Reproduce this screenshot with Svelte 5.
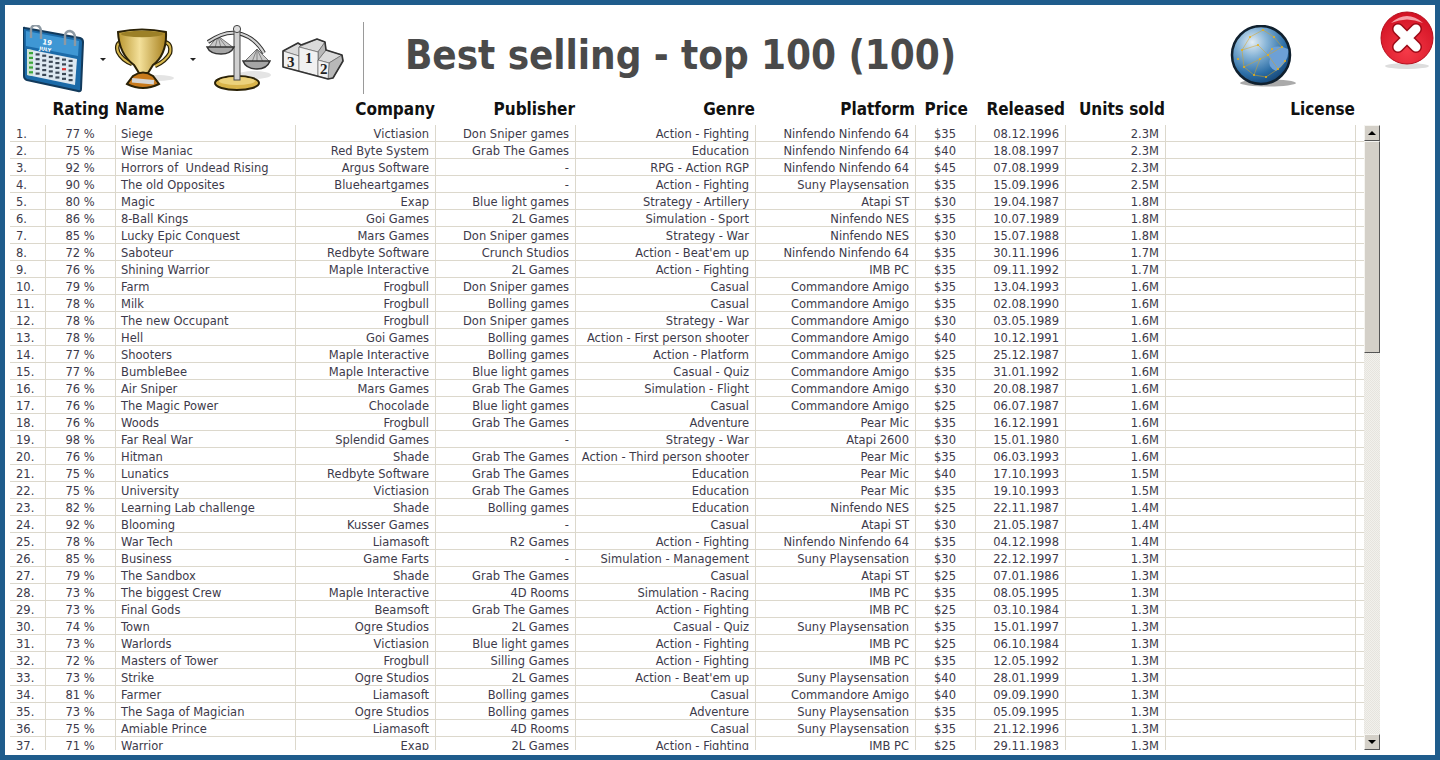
<script lang="ts">
	const raw = `77|Siege|Victiasion|Don Sniper games|Action - Fighting|Ninfendo Ninfendo 64|35|08.12.1996|2.3M
75|Wise Maniac|Red Byte System|Grab The Games|Education|Ninfendo Ninfendo 64|40|18.08.1997|2.3M
92|Horrors of  Undead Rising|Argus Software|-|RPG - Action RGP|Ninfendo Ninfendo 64|45|07.08.1999|2.3M
90|The old Opposites|Blueheartgames|-|Action - Fighting|Suny Playsensation|35|15.09.1996|2.5M
80|Magic|Exap|Blue light games|Strategy - Artillery|Atapi ST|30|19.04.1987|1.8M
86|8-Ball Kings|Goi Games|2L Games|Simulation - Sport|Ninfendo NES|35|10.07.1989|1.8M
85|Lucky Epic Conquest|Mars Games|Don Sniper games|Strategy - War|Ninfendo NES|30|15.07.1988|1.8M
72|Saboteur|Redbyte Software|Crunch Studios|Action - Beat'em up|Ninfendo Ninfendo 64|35|30.11.1996|1.7M
76|Shining Warrior|Maple Interactive|2L Games|Action - Fighting|IMB PC|35|09.11.1992|1.7M
79|Farm|Frogbull|Don Sniper games|Casual|Commandore Amigo|35|13.04.1993|1.6M
78|Milk|Frogbull|Bolling games|Casual|Commandore Amigo|35|02.08.1990|1.6M
78|The new Occupant|Frogbull|Don Sniper games|Strategy - War|Commandore Amigo|30|03.05.1989|1.6M
78|Hell|Goi Games|Bolling games|Action - First person shooter|Commandore Amigo|40|10.12.1991|1.6M
77|Shooters|Maple Interactive|Bolling games|Action - Platform|Commandore Amigo|25|25.12.1987|1.6M
77|BumbleBee|Maple Interactive|Blue light games|Casual - Quiz|Commandore Amigo|35|31.01.1992|1.6M
76|Air Sniper|Mars Games|Grab The Games|Simulation - Flight|Commandore Amigo|30|20.08.1987|1.6M
76|The Magic Power|Chocolade|Blue light games|Casual|Commandore Amigo|25|06.07.1987|1.6M
76|Woods|Frogbull|Grab The Games|Adventure|Pear Mic|35|16.12.1991|1.6M
98|Far Real War|Splendid Games|-|Strategy - War|Atapi 2600|30|15.01.1980|1.6M
76|Hitman|Shade|Grab The Games|Action - Third person shooter|Pear Mic|35|06.03.1993|1.6M
75|Lunatics|Redbyte Software|Grab The Games|Education|Pear Mic|40|17.10.1993|1.5M
75|University|Victiasion|Grab The Games|Education|Pear Mic|35|19.10.1993|1.5M
82|Learning Lab challenge|Shade|Bolling games|Education|Ninfendo NES|25|22.11.1987|1.4M
92|Blooming|Kusser Games|-|Casual|Atapi ST|30|21.05.1987|1.4M
78|War Tech|Liamasoft|R2 Games|Action - Fighting|Ninfendo Ninfendo 64|35|04.12.1998|1.4M
85|Business|Game Farts|-|Simulation - Management|Suny Playsensation|30|22.12.1997|1.3M
79|The Sandbox|Shade|Grab The Games|Casual|Atapi ST|25|07.01.1986|1.3M
73|The biggest Crew|Maple Interactive|4D Rooms|Simulation - Racing|IMB PC|35|08.05.1995|1.3M
73|Final Gods|Beamsoft|Grab The Games|Action - Fighting|IMB PC|25|03.10.1984|1.3M
74|Town|Ogre Studios|2L Games|Casual - Quiz|Suny Playsensation|35|15.01.1997|1.3M
73|Warlords|Victiasion|Blue light games|Action - Fighting|IMB PC|25|06.10.1984|1.3M
72|Masters of Tower|Frogbull|Silling Games|Action - Fighting|IMB PC|35|12.05.1992|1.3M
73|Strike|Ogre Studios|2L Games|Action - Beat'em up|Suny Playsensation|40|28.01.1999|1.3M
81|Farmer|Liamasoft|Bolling games|Casual|Commandore Amigo|40|09.09.1990|1.3M
73|The Saga of Magician|Ogre Studios|Bolling games|Adventure|Suny Playsensation|35|05.09.1995|1.3M
75|Amiable Prince|Liamasoft|4D Rooms|Casual|Suny Playsensation|35|21.12.1996|1.3M
71|Warrior|Exap|2L Games|Action - Fighting|IMB PC|25|29.11.1983|1.3M`;

	const rows = raw.split('\n').map((line) => line.split('|'));

	// calendar page is skewed, each column sits a bit lower than the last
	const calRows = [0, 1, 2, 3, 4];
	const calCols = [0, 1, 2, 3, 4, 5, 6];
	const networkDots = [
		[12, 25], [20, 12], [33, 5], [44, 12], [52, 22], [38, 30], [30, 34], [14, 42],
		[24, 50], [36, 52], [48, 44], [55, 36], [42, 24], [28, 20], [8, 34]
	];
</script>

<div class="frame">
	<header class="toolbar">
		<div class="tools">
			<svg class="calendar" width="62" height="68" viewBox="0 0 62 68">
				<path d="M2 3 L57 13 Q60 14 60 17 L58 64 Q58 67 55 66 L4 55 Q1 54 1 51 L0 5 Q0 2 2 3Z" fill="#1b6aa8" stroke="#123a5c" stroke-width="2"/>
				<path d="M3 6 L56 16 L55 31 L3 21Z" fill="#3f97d4"/>
				<path d="M4 24 L54 34 L52 60 L4 50Z" fill="#dde8f1"/>
				<path d="M4 24 L10 25 L10 51 L4 50Z" fill="#cfe3d4"/>
				<path d="M8 13 V4 Q9 0 13 0 Q18 1 18 7 V14 M42 20 V10 Q43 6 47 6 Q52 7 52 13 V21" fill="none" stroke="#8d99a3" stroke-width="2.4"/>
				<text x="19" y="19" class="cal-num" transform="rotate(10 19 19)">19</text>
				<text x="16" y="25" class="cal-month" transform="rotate(10 16 25)">JULY</text>
				{#each calRows as r}
					{#each calCols as c}
						<rect x={6 + c * 6.6} y={27 + r * 4.8 + c * 1.3} width="4" height="2.2" fill={c === 0 ? '#3aa53a' : r === 2 && c === 5 ? '#d33' : '#3b4856'}/>
					{/each}
				{/each}
			</svg>
			<span class="caret"></span>
			<svg class="trophy" width="62" height="62" viewBox="0 0 62 62">
				<defs>
					<linearGradient id="gold" x1="0" x2="1" y1="0" y2="0">
						<stop offset="0" stop-color="#b9962f"/>
						<stop offset="0.45" stop-color="#f3e09a"/>
						<stop offset="1" stop-color="#a8811f"/>
					</linearGradient>
				</defs>
				<ellipse cx="44" cy="50" rx="16" ry="3" fill="#e4e4e4"/>
				<path d="M9 13 Q1 15 4 24 Q8 32 18 36" fill="none" stroke="#2b2207" stroke-width="4.5"/>
				<path d="M9 13 Q1 15 4 24 Q8 32 18 36" fill="none" stroke="#d8b84e" stroke-width="2"/>
				<path d="M50 14 Q58 15 56 25 Q52 33 41 38" fill="none" stroke="#2b2207" stroke-width="4.5"/>
				<path d="M50 14 Q58 15 56 25 Q52 33 41 38" fill="none" stroke="#d8b84e" stroke-width="2"/>
				<path d="M4 4 Q28 -1 52 4 Q53 26 39 37 L34 45 H25 L20 37 Q5 26 4 4Z" fill="url(#gold)" stroke="#2b2207" stroke-width="2"/>
				<ellipse cx="28" cy="6" rx="21" ry="3.2" fill="#9c8027"/>
				<path d="M19 48 Q29 41 39 48 L45 56 Q29 64 13 56Z" fill="#c87a1c" stroke="#2b2207" stroke-width="2"/>
				<rect x="18" y="51" width="22" height="4.5" fill="#d6d6d6" transform="rotate(5 29 53)"/>
			</svg>
			<span class="caret second"></span>
			<svg class="scales" width="70" height="68" viewBox="0 0 70 68">
				<ellipse cx="50" cy="50" rx="17" ry="4" fill="#e4e4e4"/>
				<ellipse cx="33" cy="58" rx="22" ry="7" fill="#d9b44a" stroke="#2b2207" stroke-width="2"/>
				<ellipse cx="33" cy="56" rx="18" ry="4" fill="#ecd27c"/>
				<path d="M14 11 L4 23 H30Z M53 24 L40 37 H66Z" fill="#c9c9c9" stroke="#555" stroke-width="0.8"/>
				<path d="M14 11 L11 23 M14 11 L17 23 M14 11 L23 23 M53 24 L48 37 M53 24 L53 37 M53 24 L59 37" stroke="#666" stroke-width="0.7" fill="none"/>
				<path d="M4 17 Q20 6 33 8 Q50 11 60 28" fill="none" stroke="#333" stroke-width="4"/>
				<path d="M4 17 Q20 6 33 8 Q50 11 60 28" fill="none" stroke="#d4d4d4" stroke-width="2"/>
				<rect x="30" y="5" width="6" height="50" fill="#d0d0d0" stroke="#444" stroke-width="1"/>
				<circle cx="33" cy="4" r="3.6" fill="#ddd" stroke="#444"/>
				<path d="M3 22 H30 Q27 29 17 29 Q6 29 3 22Z" fill="#a6a6a6" stroke="#333" stroke-width="1.5"/>
				<path d="M39 36 H66 Q63 44 53 44 Q42 44 39 36Z" fill="#a6a6a6" stroke="#333" stroke-width="1.5"/>
			</svg>
			<svg class="podium" width="64" height="44" viewBox="0 0 64 44">
				<g stroke="#555" stroke-width="0.6" stroke-linejoin="round">
					<path d="M2 13 L17 5 L20 7 L18 9 L18 18Z" fill="#dadada"/>
					<path d="M18 9 L36 1 L44 4 L37 14Z" fill="#dadada"/>
					<path d="M37 22 L45 12 L61 17 L48 25Z" fill="#dadada"/>
					<path d="M37 14 L44 4 L45 12 L37 22Z" fill="#b8b8b8"/>
					<path d="M48 25 L61 17 L62 23 L52 40 L47 41Z" fill="#b8b8b8"/>
					<path d="M2 13 L18 18 L18 33 L2 29Z" fill="#f1f1f1"/>
					<path d="M18 9 L37 14 L37 38 L18 33Z" fill="#f1f1f1"/>
					<path d="M37 22 L48 25 L47 41 L37 38Z" fill="#f1f1f1"/>
				</g>
				<path d="M2 13 L17 5 L20 7 L36 1 L44 4 L45 12 L61 17 L62 23 L52 40 L47 41 L2 29Z" fill="none" stroke="#333" stroke-width="1.6" stroke-linejoin="round"/>
				<text x="6" y="29" class="rank">3</text>
				<text x="24" y="25" class="rank">1</text>
				<text x="39" y="36" class="rank">2</text>
			</svg>
		</div>
		<div class="divider"></div>
		<h1>Best selling - top 100 (100)</h1>
		<svg class="globe" width="68" height="66" viewBox="0 0 68 66">
			<defs>
				<radialGradient id="sea" cx="0.35" cy="0.28" r="0.8">
					<stop offset="0" stop-color="#e4edf3"/>
					<stop offset="0.3" stop-color="#8ab6d8"/>
					<stop offset="0.7" stop-color="#2c6ea6"/>
					<stop offset="1" stop-color="#123f6e"/>
				</radialGradient>
			</defs>
			<ellipse cx="38" cy="58" rx="28" ry="3.5" fill="#aaa"/>
			<circle cx="31" cy="30" r="29" fill="url(#sea)" stroke="#10202e" stroke-width="2.5"/>
			<path d="M37 27 Q44 18 58 24 Q60 36 46 46 Q37 42 40 34Z" fill="#6da0d6"/>
			<path d="M12 25 L20 12 L33 5 L44 12 L52 22 L38 30 L28 20 L12 25 L14 42 L24 50 L36 52 L48 44 L55 36 M30 34 L14 42 M30 34 L38 30 L42 24 M30 34 L24 50 M48 44 L38 30" fill="none" stroke="#d9a520" stroke-width="0.5"/>
			{#each networkDots as d}
				<circle cx={d[0]} cy={d[1]} r="1" fill="#eeb011"/>
			{/each}
		</svg>
		<svg class="close" width="56" height="60" viewBox="0 0 56 60">
			<defs>
				<radialGradient id="red" cx="0.5" cy="0.75" r="0.8">
					<stop offset="0" stop-color="#f53a48"/>
					<stop offset="1" stop-color="#cf0e20"/>
				</radialGradient>
			</defs>
			<ellipse cx="28" cy="55" rx="22" ry="3" fill="#ddd"/>
			<circle cx="28" cy="27" r="26" fill="url(#red)" stroke="#b50d1c"/>
			<path d="M12 12 Q28 -2 44 12 Q28 5 12 12Z" fill="#f7a0a8"/>
			<path d="M19 18 L37 36 M37 18 L19 36" stroke="#9c0a16" stroke-width="12" stroke-linecap="round"/>
			<path d="M19 18 L37 36 M37 18 L19 36" stroke="#fff" stroke-width="9" stroke-linecap="round"/>
		</svg>
	</header>

	<div class="columns">
		<span></span>
		<span class="h-rating">Rating</span>
		<span class="h-name">Name</span>
		<span class="right">Company</span>
		<span class="right">Publisher</span>
		<span class="right">Genre</span>
		<span class="right">Platform</span>
		<span class="right h-price">Price</span>
		<span class="right">Released</span>
		<span class="right">Units sold</span>
		<span class="right">License</span>
	</div>

	<div class="body">
		<div class="table">
			{#each rows as row, i}
				<div class="row">
					<span>{i + 1}.</span>
					<span class="center">{row[0]} %</span>
					<span>{row[1]}</span>
					<span class="right">{row[2]}</span>
					<span class="right">{row[3]}</span>
					<span class="right">{row[4]}</span>
					<span class="right">{row[5]}</span>
					<span class="center">${row[6]}</span>
					<span class="right">{row[7]}</span>
					<span class="right">{row[8]}</span>
					<span></span>
				</div>
			{/each}
		</div>
		<div class="scrollbar">
			<div class="arrow"><i class="up"></i></div>
			<div class="thumb"></div>
			<div class="track"></div>
			<div class="arrow"><i class="down"></i></div>
		</div>
	</div>
</div>

<style>
	:global(body) {
		margin: 0;
		background: #fff;
	}

	.frame {
		box-sizing: border-box;
		width: 1440px;
		height: 760px;
		border: 5px solid #1f5c8c;
		background: #fff;
		overflow: hidden;
		font-family: 'DejaVu Sans', sans-serif;
		display: flex;
		flex-direction: column;
	}

	.toolbar {
		height: 93px;
		display: flex;
		align-items: flex-start;
		position: relative;
		flex: none;
	}

	.tools {
		display: flex;
		align-items: flex-start;
		margin: 20px 0 0 18px;
		width: 340px;
		flex: none;
	}

	.calendar {
		flex: none;
	}

	.caret {
		width: 0;
		height: 0;
		border: 3px solid transparent;
		border-top: 3px solid #222;
		border-bottom: 0;
		margin: 33px 0 0 15px;
		flex: none;
	}

	.caret.second {
		margin-left: 14px;
	}

	.trophy {
		margin: 3px 0 0 8px;
		flex: none;
	}

	.scales {
		margin: 0 0 0 8px;
		flex: none;
	}

	.podium {
		margin: 13px 0 0 7px;
		flex: none;
	}

	.divider {
		width: 1px;
		height: 72px;
		background: #9a9a9a;
		margin-top: 17px;
		flex: none;
	}

	h1 {
		margin: 27px 0 0 41px;
		font-size: 40px;
		font-stretch: condensed;
		letter-spacing: -0.07px;
		line-height: 46px;
		font-weight: 700;
		color: #4a4a4a;
		white-space: nowrap;
		width: 825px;
		flex: none;
	}

	.globe {
		margin-top: 20px;
		flex: none;
	}

	.close {
		position: absolute;
		top: 6px;
		right: 0;
	}

	.cal-num {
		font: 700 7px 'DejaVu Sans', sans-serif;
		fill: #fff;
	}

	.cal-month {
		font: 700 5px 'DejaVu Sans', sans-serif;
		fill: #fff;
	}

	.rank {
		font: 700 15px 'Liberation Serif', serif;
		fill: #222;
	}

	.columns,
	.row {
		display: grid;
		grid-template-columns: 36px 70px 180px 140px 140px 180px 160px 60px 90px 100px 190px;
	}

	.columns {
		height: 27px;
		margin-left: 5px;
		font-size: 17px;
		font-stretch: condensed;
		line-height: 22px;
		font-weight: 700;
		color: #111;
		flex: none;
		white-space: nowrap;
	}

	.columns span {
		padding-right: 1px;
	}

	.columns .h-rating {
		text-align: right;
		padding-right: 7px;
	}

	.h-name {
		margin-left: -1px;
	}

	.columns .h-price {
		padding-right: 8px;
	}

	.body {
		display: flex;
		align-items: flex-start;
		flex: 1;
		min-height: 0;
		margin-left: 5px;
	}

	.table {
		width: 1354px;
		height: 625px;
		overflow: hidden;
		flex: none;
	}

	.row {
		height: 17px;
		box-sizing: border-box;
		border-bottom: 1px solid #dcd8cc;
		font-size: 11.5px;
		line-height: 18px;
		color: #3d3a4a;
		white-space: pre;
	}

	.row span {
		box-sizing: border-box;
		border-right: 1px solid #dcd8cc;
		padding: 0 6px 0 5px;
		height: 16px;
		overflow: hidden;
	}

	.row span:first-child {
		padding-left: 6px;
	}

	.right {
		text-align: right;
	}

	.center {
		text-align: center;
	}

	.scrollbar {
		width: 16px;
		height: 625px;
		background: repeating-conic-gradient(#e6e4de 0 25%, #f2f1ed 0 50%) 0 0 / 2px 2px;
		display: flex;
		flex-direction: column;
		flex: none;
	}

	.arrow {
		height: 16px;
		box-sizing: border-box;
		background: #d4d0c8;
		border: 1px solid;
		border-color: #f5f4f0 #555 #555 #f5f4f0;
		display: flex;
		align-items: center;
		justify-content: center;
		flex: none;
	}

	.arrow i {
		width: 0;
		height: 0;
		border: 4px solid transparent;
	}

	.arrow .up {
		border-top: 0;
		border-bottom: 4px solid #000;
	}

	.arrow .down {
		border-bottom: 0;
		border-top: 4px solid #000;
	}

	.thumb {
		height: 212px;
		box-sizing: border-box;
		background: #d4d0c8;
		border: 1px solid;
		border-color: #f5f4f0 #555 #555 #f5f4f0;
		flex: none;
	}

	.track {
		flex: 1;
	}
</style>
